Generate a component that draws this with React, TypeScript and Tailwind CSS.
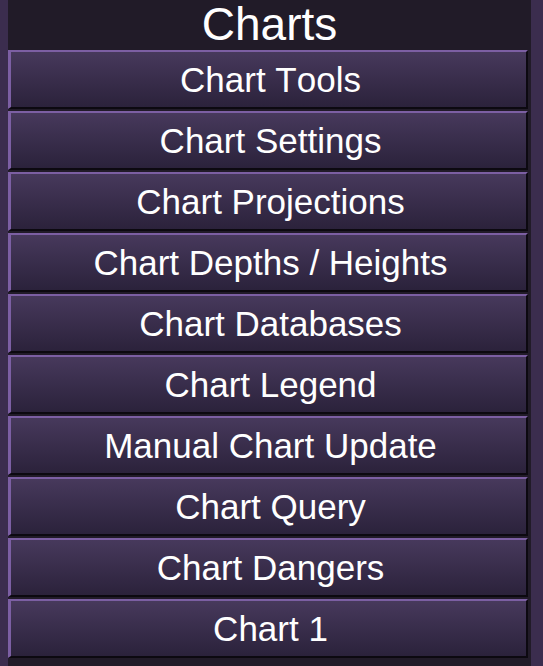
import React from "react";

const items = [
  "Chart Tools",
  "Chart Settings",
  "Chart Projections",
  "Chart Depths / Heights",
  "Chart Databases",
  "Chart Legend",
  "Manual Chart Update",
  "Chart Query",
  "Chart Dangers",
  "Chart 1",
];

export default function App() {
  return (
    <div
      className="w-[543px] h-[666px] bg-[#3b2d4e] pl-[8px] pr-[12px] flex overflow-hidden [font-kerning:none]"
      style={{ fontFamily: '"Liberation Sans", Arial, sans-serif' }}
    >
      <div className="flex-1 bg-[#211b28] flex flex-col">
        <div className="h-[50px] flex items-start justify-center">
          <span className="text-white text-[46px] leading-[48px]">Charts</span>
        </div>
        <div className="flex flex-col gap-[2px] pr-[3px]">
          {items.map((t) => (
            <div
              key={t}
              className="h-[59px] flex items-center justify-center text-[35px] leading-none text-white border-t-2 border-l-[3px] border-t-[#7c5fa3] border-l-[#7c5fa3] border-r-2 border-b-2 border-r-[#0c0910] border-b-[#0c0910] bg-gradient-to-b from-[#47395c] to-[#2b223b] pl-[4px]"
            >
              {t}
            </div>
          ))}
        </div>
      </div>
    </div>
  );
}
